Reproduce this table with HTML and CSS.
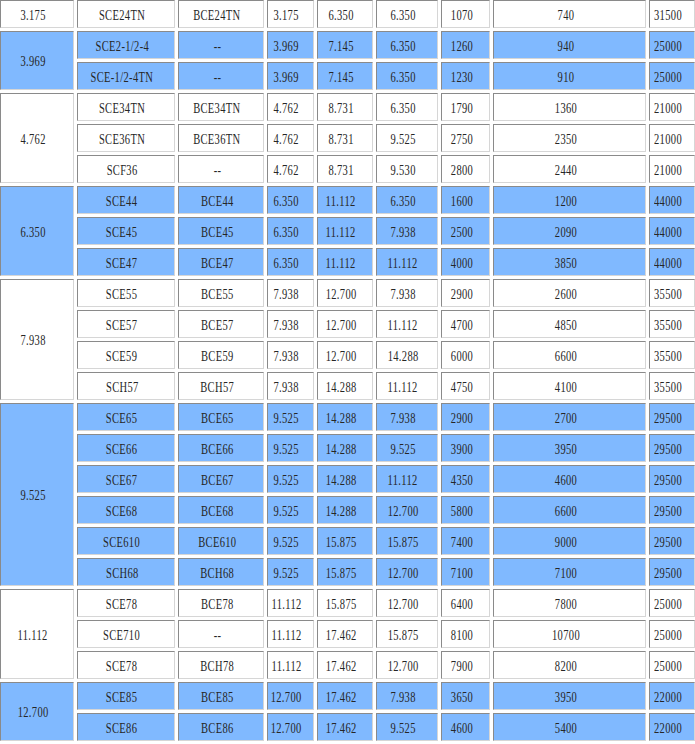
FILE: index.html
```html
<!DOCTYPE html>
<html>
<head>
<meta charset="utf-8">
<link rel="stylesheet" href="styles.css">
</head>
<body>
<div class="grid">
<div class="c"><span>3.175</span></div><div class="c"><span>SCE24TN</span></div><div class="c"><span>BCE24TN</span></div><div class="c"><span>3.175</span></div><div class="c"><span>6.350</span></div><div class="c"><span>6.350</span></div><div class="c"><span>1070</span></div><div class="c"><span>740</span></div><div class="c"><span>31500</span></div>

<div class="c b s2"><span>3.969</span></div>
<div class="c b"><span>SCE2-1/2-4</span></div><div class="c b"><span>--</span></div><div class="c b"><span>3.969</span></div><div class="c b"><span>7.145</span></div><div class="c b"><span>6.350</span></div><div class="c b"><span>1260</span></div><div class="c b"><span>940</span></div><div class="c b"><span>25000</span></div>
<div class="c b"><span>SCE-1/2-4TN</span></div><div class="c b"><span>--</span></div><div class="c b"><span>3.969</span></div><div class="c b"><span>7.145</span></div><div class="c b"><span>6.350</span></div><div class="c b"><span>1230</span></div><div class="c b"><span>910</span></div><div class="c b"><span>25000</span></div>

<div class="c s3"><span>4.762</span></div>
<div class="c"><span>SCE34TN</span></div><div class="c"><span>BCE34TN</span></div><div class="c"><span>4.762</span></div><div class="c"><span>8.731</span></div><div class="c"><span>6.350</span></div><div class="c"><span>1790</span></div><div class="c"><span>1360</span></div><div class="c"><span>21000</span></div>
<div class="c"><span>SCE36TN</span></div><div class="c"><span>BCE36TN</span></div><div class="c"><span>4.762</span></div><div class="c"><span>8.731</span></div><div class="c"><span>9.525</span></div><div class="c"><span>2750</span></div><div class="c"><span>2350</span></div><div class="c"><span>21000</span></div>
<div class="c"><span>SCF36</span></div><div class="c"><span>--</span></div><div class="c"><span>4.762</span></div><div class="c"><span>8.731</span></div><div class="c"><span>9.530</span></div><div class="c"><span>2800</span></div><div class="c"><span>2440</span></div><div class="c"><span>21000</span></div>

<div class="c b s3"><span>6.350</span></div>
<div class="c b"><span>SCE44</span></div><div class="c b"><span>BCE44</span></div><div class="c b"><span>6.350</span></div><div class="c b"><span>11.112</span></div><div class="c b"><span>6.350</span></div><div class="c b"><span>1600</span></div><div class="c b"><span>1200</span></div><div class="c b"><span>44000</span></div>
<div class="c b"><span>SCE45</span></div><div class="c b"><span>BCE45</span></div><div class="c b"><span>6.350</span></div><div class="c b"><span>11.112</span></div><div class="c b"><span>7.938</span></div><div class="c b"><span>2500</span></div><div class="c b"><span>2090</span></div><div class="c b"><span>44000</span></div>
<div class="c b"><span>SCE47</span></div><div class="c b"><span>BCE47</span></div><div class="c b"><span>6.350</span></div><div class="c b"><span>11.112</span></div><div class="c b"><span>11.112</span></div><div class="c b"><span>4000</span></div><div class="c b"><span>3850</span></div><div class="c b"><span>44000</span></div>

<div class="c s4"><span>7.938</span></div>
<div class="c"><span>SCE55</span></div><div class="c"><span>BCE55</span></div><div class="c"><span>7.938</span></div><div class="c"><span>12.700</span></div><div class="c"><span>7.938</span></div><div class="c"><span>2900</span></div><div class="c"><span>2600</span></div><div class="c"><span>35500</span></div>
<div class="c"><span>SCE57</span></div><div class="c"><span>BCE57</span></div><div class="c"><span>7.938</span></div><div class="c"><span>12.700</span></div><div class="c"><span>11.112</span></div><div class="c"><span>4700</span></div><div class="c"><span>4850</span></div><div class="c"><span>35500</span></div>
<div class="c"><span>SCE59</span></div><div class="c"><span>BCE59</span></div><div class="c"><span>7.938</span></div><div class="c"><span>12.700</span></div><div class="c"><span>14.288</span></div><div class="c"><span>6000</span></div><div class="c"><span>6600</span></div><div class="c"><span>35500</span></div>
<div class="c"><span>SCH57</span></div><div class="c"><span>BCH57</span></div><div class="c"><span>7.938</span></div><div class="c"><span>14.288</span></div><div class="c"><span>11.112</span></div><div class="c"><span>4750</span></div><div class="c"><span>4100</span></div><div class="c"><span>35500</span></div>

<div class="c b s6"><span>9.525</span></div>
<div class="c b"><span>SCE65</span></div><div class="c b"><span>BCE65</span></div><div class="c b"><span>9.525</span></div><div class="c b"><span>14.288</span></div><div class="c b"><span>7.938</span></div><div class="c b"><span>2900</span></div><div class="c b"><span>2700</span></div><div class="c b"><span>29500</span></div>
<div class="c b"><span>SCE66</span></div><div class="c b"><span>BCE66</span></div><div class="c b"><span>9.525</span></div><div class="c b"><span>14.288</span></div><div class="c b"><span>9.525</span></div><div class="c b"><span>3900</span></div><div class="c b"><span>3950</span></div><div class="c b"><span>29500</span></div>
<div class="c b"><span>SCE67</span></div><div class="c b"><span>BCE67</span></div><div class="c b"><span>9.525</span></div><div class="c b"><span>14.288</span></div><div class="c b"><span>11.112</span></div><div class="c b"><span>4350</span></div><div class="c b"><span>4600</span></div><div class="c b"><span>29500</span></div>
<div class="c b"><span>SCE68</span></div><div class="c b"><span>BCE68</span></div><div class="c b"><span>9.525</span></div><div class="c b"><span>14.288</span></div><div class="c b"><span>12.700</span></div><div class="c b"><span>5800</span></div><div class="c b"><span>6600</span></div><div class="c b"><span>29500</span></div>
<div class="c b"><span>SCE610</span></div><div class="c b"><span>BCE610</span></div><div class="c b"><span>9.525</span></div><div class="c b"><span>15.875</span></div><div class="c b"><span>15.875</span></div><div class="c b"><span>7400</span></div><div class="c b"><span>9000</span></div><div class="c b"><span>29500</span></div>
<div class="c b"><span>SCH68</span></div><div class="c b"><span>BCH68</span></div><div class="c b"><span>9.525</span></div><div class="c b"><span>15.875</span></div><div class="c b"><span>12.700</span></div><div class="c b"><span>7100</span></div><div class="c b"><span>7100</span></div><div class="c b"><span>29500</span></div>

<div class="c s3"><span>11.112</span></div>
<div class="c"><span>SCE78</span></div><div class="c"><span>BCE78</span></div><div class="c"><span>11.112</span></div><div class="c"><span>15.875</span></div><div class="c"><span>12.700</span></div><div class="c"><span>6400</span></div><div class="c"><span>7800</span></div><div class="c"><span>25000</span></div>
<div class="c"><span>SCE710</span></div><div class="c"><span>--</span></div><div class="c"><span>11.112</span></div><div class="c"><span>17.462</span></div><div class="c"><span>15.875</span></div><div class="c"><span>8100</span></div><div class="c"><span>10700</span></div><div class="c"><span>25000</span></div>
<div class="c"><span>SCE78</span></div><div class="c"><span>BCH78</span></div><div class="c"><span>11.112</span></div><div class="c"><span>17.462</span></div><div class="c"><span>12.700</span></div><div class="c"><span>7900</span></div><div class="c"><span>8200</span></div><div class="c"><span>25000</span></div>

<div class="c b s2"><span>12.700</span></div>
<div class="c b"><span>SCE85</span></div><div class="c b"><span>BCE85</span></div><div class="c b"><span>12.700</span></div><div class="c b"><span>17.462</span></div><div class="c b"><span>7.938</span></div><div class="c b"><span>3650</span></div><div class="c b"><span>3950</span></div><div class="c b"><span>22000</span></div>
<div class="c b"><span>SCE86</span></div><div class="c b"><span>BCE86</span></div><div class="c b"><span>12.700</span></div><div class="c b"><span>17.462</span></div><div class="c b"><span>9.525</span></div><div class="c b"><span>4600</span></div><div class="c b"><span>5400</span></div><div class="c b"><span>22000</span></div>
</div>
</body>
</html>
```

FILE: styles.css
```css
html, body {
  margin: 0;
  padding: 0;
  background: #ffffff;
}

body {
  font-family: "Liberation Serif", "Noto Sans CJK SC", serif;
  font-size: 15px;
  color: #262626;
}

.grid {
  display: grid;
  grid-template-columns: 74px 98px 86px 47px 56px 62px 49px 153px 46px;
  grid-auto-rows: 28px;
  gap: 3px;
  width: 695px;
}

.c {
  box-sizing: border-box;
  border: 1px solid;
  border-color: #8a8a8a #d6d6d6 #d6d6d6 #8a8a8a;
  background: #ffffff;
  display: flex;
  align-items: center;
  justify-content: center;
  padding: 2px 8px 0 0;
  white-space: nowrap;
  overflow: hidden;
}

.c span {
  display: inline-block;
  letter-spacing: 0.5px;
  transform: scaleX(0.7);
}

.b {
  background: #80b9ff;
}

.s2 { grid-row: span 2; }
.s3 { grid-row: span 3; }
.s4 { grid-row: span 4; }
.s6 { grid-row: span 6; }
```
